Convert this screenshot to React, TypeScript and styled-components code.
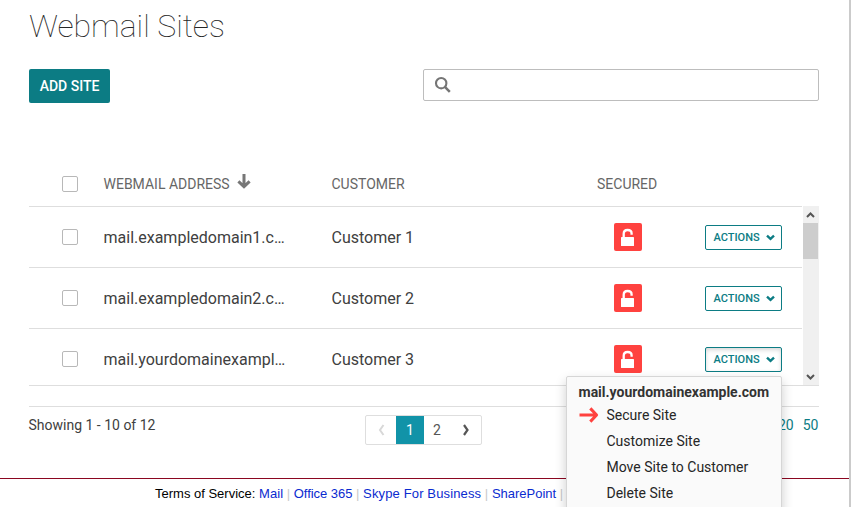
import React from 'react';
import styled, { createGlobalStyle } from 'styled-components';

const Global = createGlobalStyle`
  * { box-sizing: border-box; }
  html, body { margin: 0; height: 507px; overflow: hidden; background: #fff; }
  body { font-family: Roboto, "Liberation Sans", sans-serif; color: #404040; }
  button { font-family: inherit; margin: 0; }
`;

const Page = styled.div`
  width: 851px;
  height: 507px;
  overflow: hidden;
  border-right: 2px solid #cbcbcb;
  display: flex;
  flex-direction: column;
`;

const Content = styled.main`
  width: 790px;
  margin-left: 29px;
  height: 478px;
  flex: none;
`;

const Title = styled.h1`
  margin: 0;
  height: 69px;
  padding-top: 6px;
  font-size: 32px;
  line-height: 40px;
  font-weight: 100;
  letter-spacing: -0.03px;
  color: #262626;
  white-space: nowrap;
`;

const Toolbar = styled.div`
  display: flex;
  justify-content: space-between;
  align-items: flex-start;
  height: 93px;
`;

const AddButton = styled.button`
  width: 81px;
  height: 34px;
  padding: 0;
  border: 0;
  border-radius: 2px;
  background: #0c7c84;
  color: #fff;
  font-size: 14px;
  font-weight: 500;
  white-space: nowrap;
`;

const Search = styled.label`
  width: 396px;
  height: 32px;
  border: 1px solid #bdbdbd;
  border-radius: 2px;
  display: flex;
  align-items: center;
  padding-left: 10px;
`;

const columns = '74.5px 228px 265.5px 108px 97px';

const HeaderRow = styled.div`
  display: grid;
  grid-template-columns: ${columns};
  align-items: center;
  height: 44px;
  font-size: 14px;
  color: #666;
`;

const HeaderCell = styled.div`
  display: flex;
  align-items: center;
  white-space: nowrap;
`;

const SortIcon = styled.svg`
  margin: -6px 0 0 7.5px;
`;

const Scroller = styled.div`
  display: flex;
  height: 180px;
  border-bottom: 1px solid #dedede;
`;

const Rows = styled.div`
  width: 773px;
  margin-right: 1px;
  overflow: hidden;
  border-top: 1px solid #dedede;
`;

const Row = styled.div`
  display: grid;
  grid-template-columns: ${columns};
  align-items: center;
  height: 61px;
  border-bottom: 1px solid #dedede;
  font-size: 16px;
`;

const Cell = styled.div`
  width: 184px;
  overflow: hidden;
  text-overflow: ellipsis;
  white-space: nowrap;
`;

const Checkbox = styled.span`
  width: 16px;
  height: 16px;
  margin-left: 33px;
  border: 1px solid #b8b8b8;
  border-radius: 2px;
`;

const LockBadge = styled.span`
  width: 28px;
  height: 28px;
  margin-left: 17px;
  border-radius: 2px;
  background: #ff423f;
  display: flex;
`;

const ActionsButton = styled.button<{ $open: boolean }>`
  width: 77px;
  height: 25px;
  padding: 0 6.5px 0 7.5px;
  border: 1px solid #0c7c84;
  border-radius: 2px;
  background: #fff;
  box-shadow: ${p => (p.$open ? 'inset 0 2px 4px rgba(0,0,0,.16)' : 'none')};
  color: #0c7c84;
  font-size: 11px;
  font-weight: 500;
  display: flex;
  align-items: center;
  justify-content: space-between;
`;

const Scrollbar = styled.div`
  width: 16px;
  background: #f0f0f0;
  display: flex;
  flex-direction: column;
`;

const ScrollArrow = styled.svg`
  flex: none;
`;

const Thumb = styled.div`
  width: 15px;
  height: 36px;
  background: #cdcdcd;
  margin-bottom: auto;
`;

const TableFooter = styled.div`
  display: grid;
  grid-template-columns: 336px 117px 1fr;
  align-items: start;
  margin-top: 20px;
  border-top: 1px solid #dedede;
  padding-top: 8px;
  font-size: 14px;
`;

const Summary = styled.div`
  margin-left: -0.5px;
  line-height: 20px;
`;

const Pager = styled.div`
  display: grid;
  grid-template-columns: 30px 28px 26px 31px;
  height: 30px;
  border: 1px solid #dedede;
  border-radius: 2px;
`;

const PageItem = styled.span<{ $active?: boolean }>`
  display: flex;
  align-items: center;
  justify-content: center;
  background: ${p => (p.$active ? '#1193a8' : 'transparent')};
  color: ${p => (p.$active ? '#fff' : '#555')};
`;

const PageSizes = styled.div`
  display: flex;
  justify-content: flex-end;
  gap: 9px;
  margin-right: 0.5px;
  line-height: 20px;
  color: #0c7c84;
`;

const Terms = styled.footer`
  border-top: 1px solid #8b0620;
  padding: 7px 0 0 155px;
  font-family: "Liberation Sans", Arial, sans-serif;
  font-size: 13px;
  line-height: 15px;
  color: #000;
  white-space: nowrap;
`;

const TermsLink = styled.span<{ $tracking: number }>`
  color: #0a2bd0;
  letter-spacing: ${p => p.$tracking}px;
`;

const Divider = styled.span`
  color: #c8c8c8;
`;

const Menu = styled.div`
  position: absolute;
  left: 566px;
  top: 376px;
  width: 216px;
  height: 140px;
  border: 1px solid #d6d6d6;
  border-radius: 2px;
  background: #fafafa;
  box-shadow: 0 5px 12px rgba(0, 0, 0, 0.2);
  padding: 5px 0 0 11.5px;
  font-size: 14px;
  color: #262626;
`;

const MenuTitle = styled.div`
  height: 20px;
  line-height: 20px;
  font-weight: 700;
  color: #333;
  white-space: nowrap;
`;

const MenuItem = styled.div`
  display: grid;
  grid-template-columns: 28px 1fr;
  align-items: center;
  height: 26px;
  white-space: nowrap;
`;

const MenuLabel = styled.span`
  grid-column: 2;
`;

const sites = [
  { address: 'mail.exampledomain1.com', customer: 'Customer 1', open: false },
  { address: 'mail.exampledomain2.com', customer: 'Customer 2', open: false },
  { address: 'mail.yourdomainexample.com', customer: 'Customer 3', open: true },
];

const links = [
  { label: 'Mail', tracking: 0.05 },
  { label: 'Office 365', tracking: -0.03 },
  { label: 'Skype For Business', tracking: 0.14 },
  { label: 'SharePoint', tracking: 0 },
];

const menuItems = ['Secure Site', 'Customize Site', 'Move Site to Customer', 'Delete Site'];

const Lock = () => (
  <svg width="28" height="28" viewBox="0 0 28 28">
    <path d="M9.7 15V10.8C9.7 8.2 11.3 7 13.6 7s4 1.3 4 3.4v1.3" fill="none" stroke="#fff" strokeWidth="2.3" />
    <rect x="7" y="14" width="13" height="9" rx="0.6" fill="#fff" />
  </svg>
);

export default function App() {
  return (
    <>
      <Global />
      <Page>
        <Content>
          <Title>Webmail Sites</Title>
          <Toolbar>
            <AddButton>ADD SITE</AddButton>
            <Search>
              <svg width="18" height="18" viewBox="0 0 18 18" fill="none" stroke="#757575" strokeWidth="2.1">
                <circle cx="7.2" cy="7.2" r="5.2" />
                <path d="M10.9 10.9l4.9 4.9" strokeWidth="2.5" />
              </svg>
            </Search>
          </Toolbar>
          <HeaderRow>
            <Checkbox />
            <HeaderCell>
              WEBMAIL ADDRESS
              <SortIcon width="14" height="16" viewBox="0 0 14 16" fill="none" stroke="#777" strokeWidth="3">
                <path d="M7 1v13M1.4 8.3L7 13.6l5.6-5.3" />
              </SortIcon>
            </HeaderCell>
            <HeaderCell>CUSTOMER</HeaderCell>
            <HeaderCell>SECURED</HeaderCell>
          </HeaderRow>
          <Scroller>
            <Rows>
              {sites.map(site => (
                <Row key={site.address}>
                  <Checkbox />
                  <Cell>{site.address}</Cell>
                  <Cell>{site.customer}</Cell>
                  <LockBadge><Lock /></LockBadge>
                  <ActionsButton $open={site.open}>
                    ACTIONS
                    <svg width="9" height="7" viewBox="0 0 9 7" fill="none" stroke="#0c7c84" strokeWidth="2.4">
                      <path d="M1 1.6l3.5 3.2L8 1.6" />
                    </svg>
                  </ActionsButton>
                </Row>
              ))}
            </Rows>
            <Scrollbar>
              <ScrollArrow width="16" height="17" viewBox="0 0 16 17" fill="none" stroke="#555" strokeWidth="2">
                <path d="M4 11L7.5 7.5l3.5 3.5" />
              </ScrollArrow>
              <Thumb />
              <ScrollArrow width="16" height="17" viewBox="0 0 16 17" fill="none" stroke="#555" strokeWidth="2">
                <path d="M4 7L7.5 10.5l3.5-3.5" />
              </ScrollArrow>
            </Scrollbar>
          </Scroller>
          <TableFooter>
            <Summary>Showing 1 - 10 of 12</Summary>
            <Pager>
              <PageItem>
                <svg width="8" height="12" viewBox="0 0 8 12" fill="none" stroke="#d8d8d8" strokeWidth="2">
                  <path d="M6.5 1L3 6L6.5 11" />
                </svg>
              </PageItem>
              <PageItem $active>1</PageItem>
              <PageItem>2</PageItem>
              <PageItem>
                <svg width="8" height="12" viewBox="0 0 8 12" fill="none" stroke="#555" strokeWidth="2.2">
                  <path d="M2 1l3.5 5L2 11" />
                </svg>
              </PageItem>
            </Pager>
            <PageSizes><span>20</span><span>50</span></PageSizes>
          </TableFooter>
        </Content>
        <Terms>
          Terms of Service:{' '}
          {links.map(link => (
            <React.Fragment key={link.label}>
              <TermsLink $tracking={link.tracking}>{link.label}</TermsLink> <Divider>|</Divider>{' '}
            </React.Fragment>
          ))}
        </Terms>
      </Page>
      <Menu>
        <MenuTitle>mail.yourdomainexample.com</MenuTitle>
        {menuItems.map((item, i) => (
          <MenuItem key={item}>
            {i === 0 && (
              <svg width="20" height="16" viewBox="0 0 20 16" fill="none" stroke="#ff423f" strokeWidth="3">
                <path d="M0.5 8H17M11.3 1.4L17.6 8l-6.3 6.6" strokeLinejoin="round" />
              </svg>
            )}
            <MenuLabel>{item}</MenuLabel>
          </MenuItem>
        ))}
      </Menu>
    </>
  );
}
